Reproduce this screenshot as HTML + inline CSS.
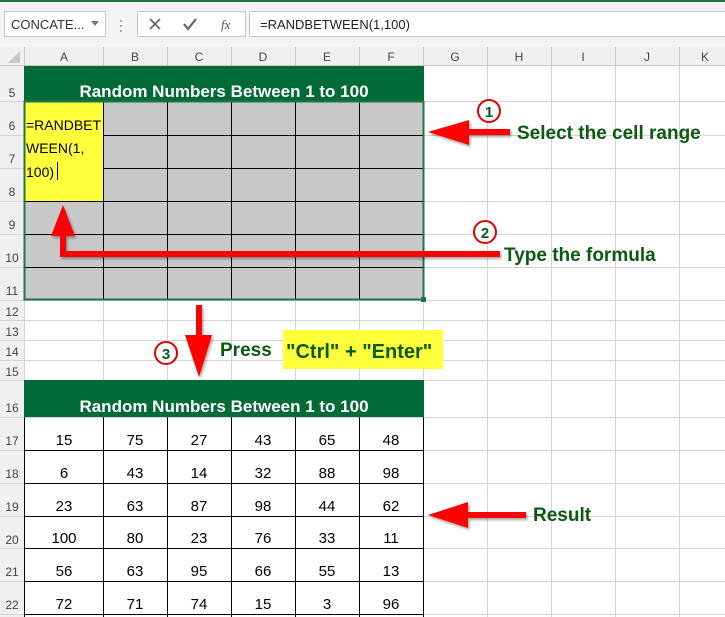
<!DOCTYPE html>
<html><head><meta charset="utf-8"><style>
html,body{margin:0;padding:0;background:#fff;}
svg{display:block;font-family:"Liberation Sans",sans-serif;}
</style></head><body>
<svg width="725" height="617" viewBox="0 0 725 617" xmlns="http://www.w3.org/2000/svg">
<defs><filter id="sh" x="-20%" y="-20%" width="140%" height="160%"><feDropShadow dx="1.5" dy="2" stdDeviation="1.2" flood-color="#000" flood-opacity="0.35"/></filter></defs>
<rect x="0" y="0" width="725" height="47" fill="#f3f3f3"/>
<rect x="0" y="0" width="725" height="2" fill="#217346"/>
<rect x="4.5" y="11.5" width="101" height="25" fill="#fff" stroke="#c6c6c6"/>
<text x="11" y="29" font-size="13" fill="#333">CONCATE...</text>
<path d="M91 21 L99 21 L95 26Z" fill="#777"/>
<g fill="#aaa"><rect x="120" y="20" width="2" height="2"/><rect x="120" y="25" width="2" height="2"/><rect x="120" y="30" width="2" height="2"/></g>
<rect x="137.5" y="11.5" width="108" height="25" fill="#fff" stroke="#c6c6c6"/>
<path d="M150 19 L160 29 M160 19 L150 29" stroke="#666" stroke-width="1.8"/>
<path d="M184 24 L188 29 L196 19" stroke="#666" stroke-width="2.2" fill="none"/>
<text x="221" y="29" font-size="13" font-style="italic" font-family="Liberation Serif,serif" fill="#555">fx</text>
<rect x="249.5" y="11.5" width="480" height="25" fill="#fff" stroke="#c6c6c6"/>
<text x="260" y="29" font-size="13" fill="#222">=RANDBETWEEN(1,100)</text>
<rect x="0" y="47" width="725" height="19" fill="#f0f0f0"/>
<rect x="0" y="66" width="24" height="551" fill="#f0f0f0"/>
<path d="M20 51 L20 63 L8 63Z" fill="#c8c8c8"/>
<g stroke="#c9c9c9" stroke-width="1">
<line x1="24.5" y1="47" x2="24.5" y2="66"/><line x1="103.5" y1="47" x2="103.5" y2="66"/><line x1="167.5" y1="47" x2="167.5" y2="66"/><line x1="231.5" y1="47" x2="231.5" y2="66"/><line x1="295.5" y1="47" x2="295.5" y2="66"/><line x1="359.5" y1="47" x2="359.5" y2="66"/><line x1="423.5" y1="47" x2="423.5" y2="66"/><line x1="487.5" y1="47" x2="487.5" y2="66"/><line x1="551.5" y1="47" x2="551.5" y2="66"/><line x1="615.5" y1="47" x2="615.5" y2="66"/><line x1="679.5" y1="47" x2="679.5" y2="66"/>
<line x1="0" y1="65.5" x2="725" y2="65.5"/>
</g>
<g font-size="12" fill="#444" text-anchor="middle">
<text x="64" y="61">A</text><text x="135" y="61">B</text><text x="199" y="61">C</text><text x="263" y="61">D</text><text x="327" y="61">E</text><text x="391" y="61">F</text><text x="455" y="61">G</text><text x="519" y="61">H</text><text x="583" y="61">I</text><text x="647" y="61">J</text><text x="705" y="61">K</text>
</g>
<g stroke="#d4d4d4" stroke-width="1">
<line x1="487.5" y1="66" x2="487.5" y2="617"/><line x1="551.5" y1="66" x2="551.5" y2="617"/><line x1="615.5" y1="66" x2="615.5" y2="617"/><line x1="679.5" y1="66" x2="679.5" y2="617"/>
<line x1="103.5" y1="300" x2="103.5" y2="380"/><line x1="167.5" y1="300" x2="167.5" y2="380"/><line x1="231.5" y1="300" x2="231.5" y2="380"/><line x1="295.5" y1="300" x2="295.5" y2="380"/><line x1="359.5" y1="300" x2="359.5" y2="380"/><line x1="423.5" y1="300" x2="423.5" y2="380"/>
<line x1="0" y1="101.5" x2="725" y2="101.5"/><line x1="0" y1="135.5" x2="725" y2="135.5"/><line x1="0" y1="168.5" x2="725" y2="168.5"/><line x1="0" y1="201.5" x2="725" y2="201.5"/><line x1="0" y1="234.5" x2="725" y2="234.5"/><line x1="0" y1="267.5" x2="725" y2="267.5"/><line x1="0" y1="300.5" x2="725" y2="300.5"/><line x1="0" y1="320.5" x2="725" y2="320.5"/><line x1="0" y1="340.5" x2="725" y2="340.5"/><line x1="0" y1="360.5" x2="725" y2="360.5"/><line x1="0" y1="380.5" x2="725" y2="380.5"/><line x1="0" y1="417.5" x2="725" y2="417.5"/><line x1="0" y1="450.5" x2="725" y2="450.5"/><line x1="0" y1="483.5" x2="725" y2="483.5"/><line x1="0" y1="516.5" x2="725" y2="516.5"/><line x1="0" y1="548.5" x2="725" y2="548.5"/><line x1="0" y1="581.5" x2="725" y2="581.5"/><line x1="0" y1="614.5" x2="725" y2="614.5"/>
<line x1="24.5" y1="66" x2="24.5" y2="617"/>
</g>
<g font-size="12" fill="#444" text-anchor="middle">
<text x="12" y="97">5</text><text x="12" y="130">6</text><text x="12" y="163">7</text><text x="12" y="196">8</text><text x="12" y="229">9</text><text x="12" y="262">10</text><text x="12" y="295">11</text><text x="12" y="316">12</text><text x="12" y="336">13</text><text x="12" y="356">14</text><text x="12" y="376">15</text><text x="12" y="412">16</text><text x="12" y="445">17</text><text x="12" y="478">18</text><text x="12" y="511">19</text><text x="12" y="544">20</text><text x="12" y="576">21</text><text x="12" y="609">22</text>
</g>
<rect x="24" y="66" width="400" height="35" fill="#006b37"/>
<text x="224" y="97" font-size="17" font-weight="bold" fill="#fff" text-anchor="middle">Random Numbers Between 1 to 100</text>
<rect x="24" y="101" width="400" height="199" fill="#c8c8c8"/>
<rect x="24" y="101" width="79" height="100" fill="#ffff3c"/>
<g stroke="#000" stroke-width="1">
<line x1="103.5" y1="101" x2="103.5" y2="300"/><line x1="167.5" y1="101" x2="167.5" y2="300"/><line x1="231.5" y1="101" x2="231.5" y2="300"/><line x1="295.5" y1="101" x2="295.5" y2="300"/><line x1="359.5" y1="101" x2="359.5" y2="300"/>
<line x1="103" y1="135.5" x2="424" y2="135.5"/><line x1="103" y1="168.5" x2="424" y2="168.5"/><line x1="24" y1="201.5" x2="424" y2="201.5"/><line x1="24" y1="234.5" x2="424" y2="234.5"/><line x1="24" y1="267.5" x2="424" y2="267.5"/>
</g>
<rect x="24.5" y="101.5" width="399" height="198" fill="none" stroke="#217346" stroke-width="2"/>
<rect x="421" y="297" width="5" height="5" fill="#217346"/>
<g font-size="14" fill="#000">
<text x="26" y="130">=RANDBET</text><text x="26" y="153">WEEN(1,</text><text x="26" y="177">100)</text>
</g>
<line x1="57.5" y1="162" x2="57.5" y2="180" stroke="#000"/>
<rect x="24" y="380" width="400" height="37" fill="#006b37"/>
<text x="224" y="412" font-size="17" font-weight="bold" fill="#fff" text-anchor="middle">Random Numbers Between 1 to 100</text>
<g stroke="#000" stroke-width="1">
<line x1="24.5" y1="417" x2="24.5" y2="617"/><line x1="103.5" y1="417" x2="103.5" y2="617"/><line x1="167.5" y1="417" x2="167.5" y2="617"/><line x1="231.5" y1="417" x2="231.5" y2="617"/><line x1="295.5" y1="417" x2="295.5" y2="617"/><line x1="359.5" y1="417" x2="359.5" y2="617"/><line x1="423.5" y1="417" x2="423.5" y2="617"/>
<line x1="24" y1="450.5" x2="424" y2="450.5"/><line x1="24" y1="483.5" x2="424" y2="483.5"/><line x1="24" y1="516.5" x2="424" y2="516.5"/><line x1="24" y1="548.5" x2="424" y2="548.5"/><line x1="24" y1="581.5" x2="424" y2="581.5"/><line x1="24" y1="614.5" x2="424" y2="614.5"/>
</g>
<g font-size="15" fill="#000" text-anchor="middle">
<text x="64" y="445">15</text><text x="135" y="445">75</text><text x="199" y="445">27</text><text x="263" y="445">43</text><text x="327" y="445">65</text><text x="391" y="445">48</text>
<text x="64" y="478">6</text><text x="135" y="478">43</text><text x="199" y="478">14</text><text x="263" y="478">32</text><text x="327" y="478">88</text><text x="391" y="478">98</text>
<text x="64" y="511">23</text><text x="135" y="511">63</text><text x="199" y="511">87</text><text x="263" y="511">98</text><text x="327" y="511">44</text><text x="391" y="511">62</text>
<text x="64" y="543">100</text><text x="135" y="543">80</text><text x="199" y="543">23</text><text x="263" y="543">76</text><text x="327" y="543">33</text><text x="391" y="543">11</text>
<text x="64" y="576">56</text><text x="135" y="576">63</text><text x="199" y="576">95</text><text x="263" y="576">66</text><text x="327" y="576">55</text><text x="391" y="576">13</text>
<text x="64" y="609">72</text><text x="135" y="609">71</text><text x="199" y="609">74</text><text x="263" y="609">15</text><text x="327" y="609">3</text><text x="391" y="609">96</text>
</g>
<g fill="#ff0000" filter="url(#sh)">
<path d="M428 132 L469 120 L469 129 L510 129 L510 135 L469 135 L469 145Z"/>
<path d="M428 515 L468 502 L468 512 L526 512 L526 518 L468 518 L468 528Z"/>
<path d="M500 251 L500 257 L60 257 L60 236 L51 236 L63 205 L75 236 L66 236 L66 251Z"/>
<path d="M196 305 L202 305 L202 335 L212 335 L199 377 L185 335 L196 335Z"/>
</g>
<g fill="#fff" stroke="#e00000" stroke-width="2">
<circle cx="489" cy="111" r="11"/><circle cx="485" cy="232" r="11"/><circle cx="166" cy="353" r="11"/>
</g>
<g font-size="15" font-weight="bold" fill="#0b5a12" text-anchor="middle">
<text x="489" y="117">1</text><text x="485" y="238">2</text><text x="166" y="359">3</text>
</g>
<rect x="283" y="330" width="160" height="39" fill="#ffff3c"/>
<g font-size="19" font-weight="bold" fill="#0b5a12">
<text x="517" y="139">Select the cell range</text>
<text x="504" y="261">Type the formula</text>
<text x="220" y="356">Press</text>
<text x="533" y="521">Result</text>
</g>
<text x="286" y="358" font-size="20" font-weight="bold" fill="#0b5a12">"Ctrl" + "Enter"</text>
</svg>
</body></html>
